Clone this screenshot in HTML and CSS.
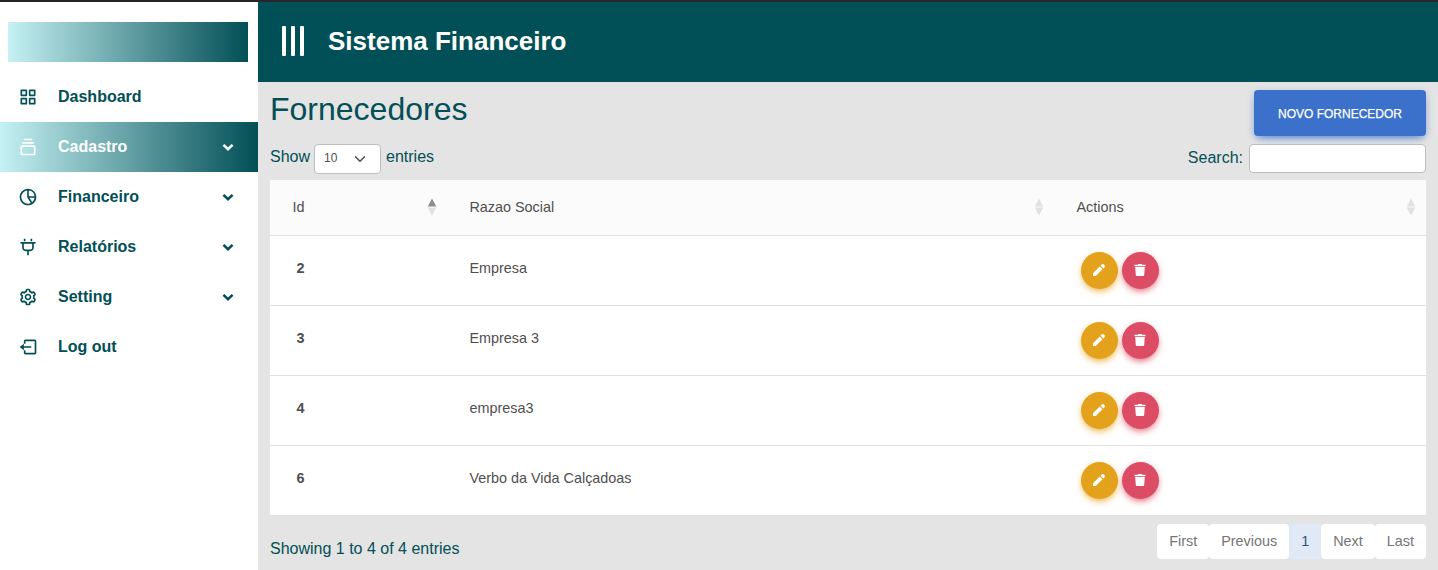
FILE: index.html
```html
<!DOCTYPE html>
<html lang="pt-BR">
<head>
<meta charset="utf-8">
<title>Sistema Financeiro</title>
<link rel="stylesheet" href="styles.css">
</head>
<body>
<svg class="defs" aria-hidden="true">
  <symbol id="chev" viewBox="0 0 24 24"><path d="M5.200 8.700 12 15.400 18.800 8.700" fill="none" stroke="currentColor" stroke-width="3.8"/></symbol>
  <symbol id="pencil" viewBox="0 0 12 12"><path d="M0 12V9.200L6.700 2.500 9.500 5.300 2.800 12zM7.500 1.700 8.600.6a1.700 1.700 0 0 1 2.400 0l.4.4a1.700 1.700 0 0 1 0 2.400l-1.100 1.100z" fill="currentColor"/></symbol>
  <symbol id="trash" viewBox="0 0 12 12"><path d="M.500.800H4L4.500 0h3l.5.800h3.500V2.200H.5zM1.200 3h9.600l-.6 8.100a1 1 0 0 1-1 .9H2.800a1 1 0 0 1-1-.9z" fill="currentColor"/></symbol>
  <symbol id="sort" viewBox="0 0 10 18"><path class="up" d="M5 .5 9.300 8.500H.7z"/><path class="down" d="M.7 9.500h8.600L5 17.500z"/></symbol>
</svg>
<div class="app">
  <aside class="sidebar">
    <div class="brand"></div>
    <nav class="menu">
      <a class="item"><svg class="icon" viewBox="0 0 24 24"><path d="M10 3H4a1 1 0 0 0-1 1v6a1 1 0 0 0 1 1h6a1 1 0 0 0 1-1V4a1 1 0 0 0-1-1zM9 9H5V5h4v4zm11-6h-6a1 1 0 0 0-1 1v6a1 1 0 0 0 1 1h6a1 1 0 0 0 1-1V4a1 1 0 0 0-1-1zm-1 6h-4V5h4v4zm-9 4H4a1 1 0 0 0-1 1v6a1 1 0 0 0 1 1h6a1 1 0 0 0 1-1v-6a1 1 0 0 0-1-1zm-1 6H5v-4h4v4zm11-6h-6a1 1 0 0 0-1 1v6a1 1 0 0 0 1 1h6a1 1 0 0 0 1-1v-6a1 1 0 0 0-1-1zm-1 6h-4v-4h4v4z"/></svg><span>Dashboard</span></a>
      <a class="item active"><svg class="icon" viewBox="0 0 24 24"><path d="M19 10H5c-1.103 0-2 .897-2 2v8c0 1.103.897 2 2 2h14c1.103 0 2-.897 2-2v-8c0-1.103-.897-2-2-2zM5 20v-8h14l.002 8H5zM5 6h14v2H5zm2-4h10v2H7z"/></svg><span>Cadastro</span><svg class="chev"><use href="#chev"/></svg></a>
      <a class="item"><svg class="icon" viewBox="0 0 24 24"><path d="M12 2C6.486 2 2 6.486 2 12s4.486 10 10 10 10-4.486 10-10S17.514 2 12 2zm7.931 9H13V4.069A8.008 8.008 0 0 1 19.931 11zM4 12c0-4.072 3.061-7.436 7-7.931V12c0 .2.060.390.167.556l4.228 6.690A7.950 7.950 0 0 1 12 20c-4.411 0-8-3.589-8-8zm13.085 6.165L13.812 13h6.119a7.990 7.990 0 0 1-2.846 5.165z"/></svg><span>Financeiro</span><svg class="chev"><use href="#chev"/></svg></a>
      <a class="item"><svg class="icon" viewBox="0 0 24 24"><path d="M3 8h2v5c0 2.206 1.794 4 4 4h2v5h2v-5h2c2.206 0 4-1.794 4-4V8h2V6H3v2zm4 0h10v5c0 1.103-.897 2-2 2H9c-1.103 0-2-.897-2-2V8zm0-6h2v3H7zm8 0h2v3h-2z"/></svg><span>Relatórios</span><svg class="chev"><use href="#chev"/></svg></a>
      <a class="item"><svg class="icon" viewBox="0 0 24 24"><path d="M12 16c2.206 0 4-1.794 4-4s-1.794-4-4-4-4 1.794-4 4 1.794 4 4 4zm0-6c1.084 0 2 .916 2 2s-.916 2-2 2-2-.916-2-2 .916-2 2-2z"/><path d="m2.845 16.136 1 1.730c.531.917 1.809 1.261 2.730.730l.529-.306A8.100 8.100 0 0 0 9 19.402V20c0 1.103.897 2 2 2h2c1.103 0 2-.897 2-2v-.598a8.132 8.132 0 0 0 1.896-1.111l.529.306c.923.530 2.198.188 2.731-.731l.999-1.729a2.001 2.001 0 0 0-.731-2.732l-.505-.292a7.718 7.718 0 0 0 0-2.224l.505-.292a2.002 2.002 0 0 0 .731-2.732l-.999-1.729c-.531-.920-1.808-1.265-2.731-.732l-.529.306A8.100 8.100 0 0 0 15 4.598V4c0-1.103-.897-2-2-2h-2c-1.103 0-2 .897-2 2v.598a8.132 8.132 0 0 0-1.896 1.111l-.529-.306c-.924-.531-2.200-.187-2.731.732l-.999 1.729a2.001 2.001 0 0 0 .731 2.732l.505.292a7.683 7.683 0 0 0 0 2.223l-.505.292a2.003 2.003 0 0 0-.731 2.733zm3.326-2.758A5.703 5.703 0 0 1 6 12c0-.462.058-.926.170-1.378a.999.999 0 0 0-.470-1.108l-1.123-.650.998-1.729 1.145.662a.997.997 0 0 0 1.188-.142 6.071 6.071 0 0 1 2.384-1.399A1 1 0 0 0 11 5.300V4h2v1.300a1 1 0 0 0 .708.956 6.083 6.083 0 0 1 2.384 1.399.999.999 0 0 0 1.188.142l1.144-.661 1 1.729-1.124.649a1 1 0 0 0-.470 1.108c.112.452.170.916.170 1.378 0 .461-.058.925-.171 1.378a1 1 0 0 0 .471 1.108l1.123.649-.998 1.729-1.145-.661a.996.996 0 0 0-1.188.142 6.071 6.071 0 0 1-2.384 1.399A1 1 0 0 0 13 18.700l.002 1.300H11v-1.300a1 1 0 0 0-.708-.956 6.083 6.083 0 0 1-2.384-1.399.992.992 0 0 0-1.188-.141l-1.144.662-1-1.729 1.124-.651a1 1 0 0 0 .471-1.108z"/></svg><span>Setting</span><svg class="chev"><use href="#chev"/></svg></a>
      <a class="item"><svg class="icon" viewBox="0 0 24 24"><path d="m2 12 5 4v-3h9v-2H7V8z"/><path d="M20 3H9c-1.103 0-2 .897-2 2v3h2V5h11v14H9v-3H7v3c0 1.103.897 2 2 2h11c1.103 0 2-.897 2-2V5c0-1.103-.897-2-2-2z"/></svg><span>Log out</span></a>
    </nav>
  </aside>
  <main class="main">
    <header class="topbar">
      <div class="bars"><i></i><i></i><i></i></div>
      <span class="title">Sistema Financeiro</span>
    </header>
    <section class="content">
      <div class="heading">
        <h1>Fornecedores</h1>
        <button class="new">NOVO FORNECEDOR</button>
      </div>
      <div class="controls">
        <div class="length"><span>Show</span><span class="select">10<svg viewBox="0 0 16 16"><path d="m2 5 6 6 6-6" fill="none" stroke="#4f4f4f" stroke-width="2" stroke-linecap="round" stroke-linejoin="round"/></svg></span><span>entries</span></div>
        <label class="search">Search:<input type="text"></label>
      </div>
      <div class="table">
        <div class="row head">
          <div>Id<svg class="sort asc"><use href="#sort"/></svg></div>
          <div>Razao Social<svg class="sort"><use href="#sort"/></svg></div>
          <div>Actions<svg class="sort"><use href="#sort"/></svg></div>
        </div>
        <div class="row"><b>2</b><span>Empresa</span><div class="actions"><button class="edit"><svg><use href="#pencil"/></svg></button><button class="del"><svg><use href="#trash"/></svg></button></div></div>
        <div class="row"><b>3</b><span>Empresa 3</span><div class="actions"><button class="edit"><svg><use href="#pencil"/></svg></button><button class="del"><svg><use href="#trash"/></svg></button></div></div>
        <div class="row"><b>4</b><span>empresa3</span><div class="actions"><button class="edit"><svg><use href="#pencil"/></svg></button><button class="del"><svg><use href="#trash"/></svg></button></div></div>
        <div class="row"><b>6</b><span>Verbo da Vida Calçadoas</span><div class="actions"><button class="edit"><svg><use href="#pencil"/></svg></button><button class="del"><svg><use href="#trash"/></svg></button></div></div>
      </div>
      <div class="footer">
        <span class="info">Showing 1 to 4 of 4 entries</span>
        <div class="pages"><a>First</a><a>Previous</a><a class="current">1</a><a>Next</a><a>Last</a></div>
      </div>
    </section>
  </main>
</div>
</body>
</html>
```

FILE: styles.css
```css
* { box-sizing: border-box; }
body {
  margin: 0;
  height: 570px;
  overflow: hidden;
  background: #e4e4e4;
  color: #024f56;
  font: 16px/24px "Liberation Sans", Arial, sans-serif;
}
.defs { display: none; }
.app {
  display: grid;
  grid-template-columns: 258px 1fr;
  height: 570px;
  border-top: 2px solid #2a2528;
}
.sidebar { background: #fff; padding-top: 20px; }
.brand {
  height: 40px;
  margin: 0 10px 10px 8px;
  background: linear-gradient(to right, #c5f1f3, #024f56);
}
.item {
  display: flex;
  align-items: center;
  height: 50px;
  padding: 0 20px 0 18px;
  font-weight: bold;
}
.item span { flex: 1; padding-bottom: 1px; }
.item.active {
  color: #fff;
  background: linear-gradient(to right, #c5f1f3, #024f56);
}
.icon { width: 20px; height: 20px; margin-right: 20px; fill: currentColor; }
.chev { width: 20px; height: 20px; padding: 2px; }

.topbar {
  display: flex;
  align-items: center;
  height: 80px;
  padding: 0 24px 2px;
  background: #025057;
}
.bars { display: flex; gap: 5px; margin-right: 24px; }
.bars i { width: 4px; height: 30px; border-radius: 1px; background: #fff; }
.title { color: #fff; font-size: 26px; font-weight: bold; line-height: 30px; }

.content { padding: 8px 12px 0; }
.heading { display: flex; justify-content: space-between; height: 54px; }
h1 { margin: 0; font-size: 32px; font-weight: normal; line-height: 38px; }
button { border: 0; color: #fff; font-family: inherit; }
.new {
  width: 172px;
  height: 46px;
  padding: 1px 0 0;
  border-radius: 4px;
  background: #3b71ca;
  font-size: 12px;
  -webkit-text-stroke: .25px #fff;
  box-shadow: 0 4px 9px -4px #3b71ca, 0 2px 6px rgba(59, 113, 202, .25);
}
.controls { display: flex; justify-content: space-between; height: 36px; }
.length { display: flex; gap: 5px; line-height: 26px; }
.length > :first-child { margin-right: -1px; }
.select {
  display: flex;
  align-items: center;
  justify-content: space-between;
  width: 67px;
  height: 30px;
  padding: 0 14px 2px 9px;
  border: 1px solid #bdbdbd;
  border-radius: 4px;
  background: #fff;
  color: #4f4f4f;
  font-size: 12px;
}
.select svg { width: 12px; height: 12px; margin-top: 2px; }
.search { display: flex; gap: 6px; line-height: 28px; }
.search input {
  width: 177px;
  height: 29px;
  border: 1px solid #bdbdbd;
  border-radius: 4px;
  background: #fff;
}

.table { background: #fff; color: #4f4f4f; font-size: 14.4px; }
.row {
  display: grid;
  grid-template-columns: 177px 607px 1fr;
  height: 70px;
  padding-left: 22.4px;
  border-bottom: 1px solid #e0e0e0;
  line-height: 23px;
}
.row > b, .row > span { padding-top: 21px; }
.row > b { padding-left: 4px; }
.row.head { height: 56px; background: #fbfbfb; }
.head > div { display: flex; justify-content: space-between; padding: 16px 10.400px 0 0; }
.head > div:nth-child(-n+2) { padding-right: 32.400px; }
.sort { width: 10px; height: 18px; margin-top: 2px; fill: #e1e1e1; }
.asc { --up: #8d8d8d; }
.up { fill: var(--up, #e1e1e1); }
.actions { display: flex; gap: 4px; padding: 16px 0 0 4.600px; }
.actions button {
  display: grid;
  place-items: center;
  width: 37px;
  height: 37px;
  padding: 0 1px 1px 0;
  border-radius: 50%;
}
.actions svg { width: 12px; height: 12px; }
.edit { background: #e4a11b; box-shadow: 0 4px 9px -4px #e4a11b, 0 2px 6px rgba(228, 161, 27, .3); }
.del { background: #dc4c64; box-shadow: 0 4px 9px -4px #dc4c64, 0 2px 6px rgba(220, 76, 100, .3); }

.footer { display: flex; justify-content: space-between; padding-top: 8px; }
.info { padding-top: 13px; }
.pages { display: flex; color: #757575; font-size: 14.4px; }
.pages a {
  height: 35px;
  padding: 0 12px;
  border-radius: 4px;
  background: #fff;
  line-height: 35px;
}
.pages .current { border-radius: 0; background: #e1e9f6; color: #2f5277; }
```
